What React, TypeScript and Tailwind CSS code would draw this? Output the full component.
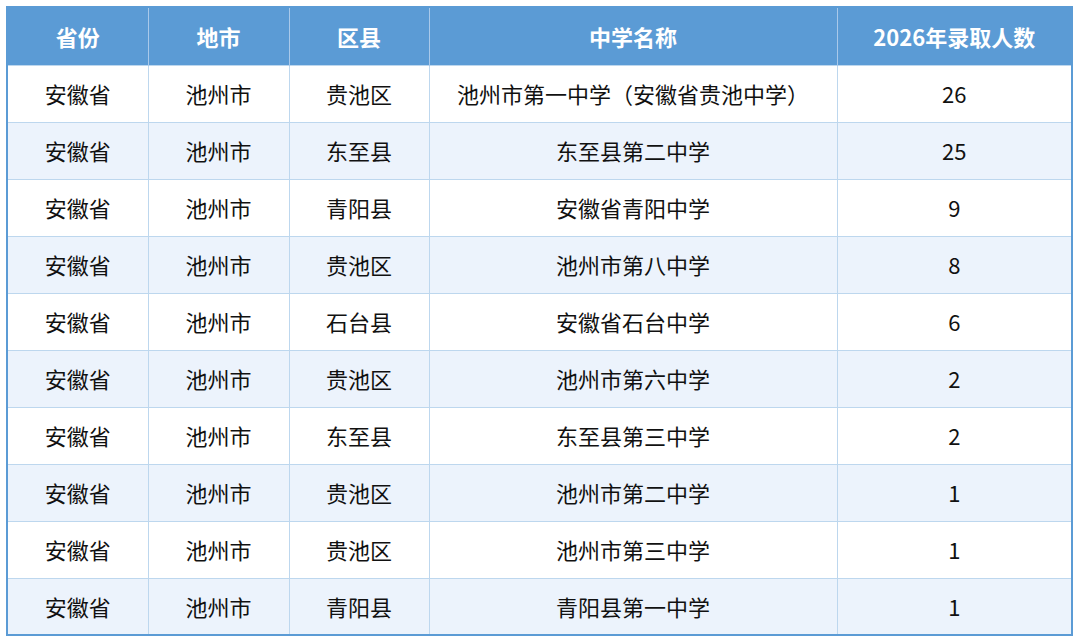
const rows: [string, string, string, string, number][] = [
  ['安徽省', '池州市', '贵池区', '池州市第一中学（安徽省贵池中学）', 26],
  ['安徽省', '池州市', '东至县', '东至县第二中学', 25],
  ['安徽省', '池州市', '青阳县', '安徽省青阳中学', 9],
  ['安徽省', '池州市', '贵池区', '池州市第八中学', 8],
  ['安徽省', '池州市', '石台县', '安徽省石台中学', 6],
  ['安徽省', '池州市', '贵池区', '池州市第六中学', 2],
  ['安徽省', '池州市', '东至县', '东至县第三中学', 2],
  ['安徽省', '池州市', '贵池区', '池州市第二中学', 1],
  ['安徽省', '池州市', '贵池区', '池州市第三中学', 1],
  ['安徽省', '池州市', '青阳县', '青阳县第一中学', 1],
];

const headers = ['省份', '地市', '区县', '中学名称', '2026年录取人数'];
const widths = ['w-[141px]', 'w-[141px]', 'w-[140px]', 'w-[408px]', 'w-[235px]'];

export default function App() {
  return (
    <div className="w-[1080px] h-[644px] bg-white pt-[6px] pl-[6px] font-['Noto_Sans_CJK_SC','Noto_Sans',sans-serif]">
      <table className="border-collapse table-fixed border-2 border-[#5b9bd5] w-[1066px]">
        <thead>
          <tr className="bg-[#5b9bd5] h-[58px]">
            {headers.map((h, i) => (
              <th
                key={h}
                className={`${widths[i]} text-white font-bold text-[22px] text-center border-l border-[#a9c9ea] first:border-l-0`}
              >
                {h}
              </th>
            ))}
          </tr>
        </thead>
        <tbody>
          {rows.map((r, idx) => (
            <tr key={idx} className={`h-[57px] ${idx % 2 === 1 ? 'bg-[#ecf3fc]' : 'bg-white'}`}>
              {r.map((c, i) => (
                <td
                  key={i}
                  className="text-center text-[22px] text-[#111] border border-[#bdd7ee] first:border-l-0 last:border-r-0"
                >
                  {c}
                </td>
              ))}
            </tr>
          ))}
        </tbody>
      </table>
    </div>
  );
}
